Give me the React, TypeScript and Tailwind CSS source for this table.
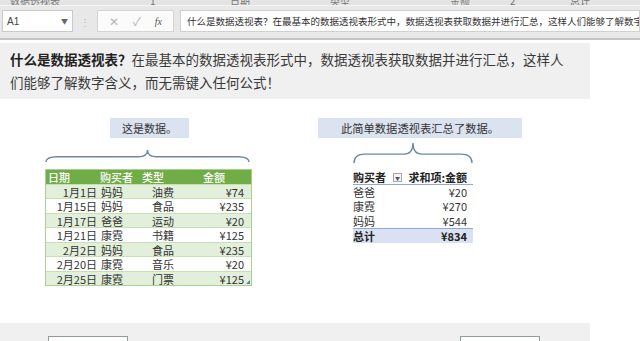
import React from "react";

const cjk = "font-['Noto_Sans_CJK_SC',sans-serif]";

const rows = [
  ["1月1日", "妈妈", "油费", "¥74"],
  ["1月15日", "妈妈", "食品", "¥235"],
  ["1月17日", "爸爸", "运动", "¥20"],
  ["1月21日", "康霓", "书籍", "¥125"],
  ["2月2日", "妈妈", "食品", "¥235"],
  ["2月20日", "康霓", "音乐", "¥20"],
  ["2月25日", "康霓", "门票", "¥125"],
];

const pivot = [
  ["爸爸", "¥20"],
  ["康霓", "¥270"],
  ["妈妈", "¥544"],
];

function Brace({ w, h }: { w: number; h: number }) {
  const c = w / 2;
  const m = h * 0.55;
  const d = `M1 ${h - 1} Q1 ${m} 12 ${m} L${c - 9} ${m} Q${c} ${m} ${c} 1 Q${c} ${m} ${c + 9} ${m} L${w - 12} ${m} Q${w - 1} ${m} ${w - 1} ${h - 1}`;
  return (
    <svg width={w} height={h} viewBox={`0 0 ${w} ${h}`} className="block">
      <path d={d} fill="none" stroke="#6f86ab" strokeWidth="1.4" />
    </svg>
  );
}

export default function App() {
  return (
    <div className={`w-[640px] h-[341px] overflow-hidden bg-white text-[#333] ${cjk}`}>
      {/* cut-off sheet row */}
      <div className="h-[6px] overflow-hidden bg-[#e4e4e4] border-b border-[#f4f4f4]">
        <div className="flex -mt-[7px] text-[10px] text-[#777] whitespace-nowrap">
          <span className="ml-[10px] w-[140px]">数据透视表</span>
          <span className="w-[80px]">1</span>
          <span className="w-[100px]">日期</span>
          <span className="w-[120px]">类型</span>
          <span className="w-[60px]">金额</span>
          <span className="w-[60px]">2</span>
          <span>总计</span>
        </div>
      </div>

      {/* formula bar */}
      <div className="h-[34px] bg-[#e8e8e8] border-b-2 border-[#c4c4c4] flex items-start pt-[4px] pl-[2px]">
        <div className="w-[71px] h-[22px] bg-white border border-[#c9c9c9] flex items-center justify-between px-[4px]">
          <span className="text-[10px] text-[#444] font-['Liberation_Sans',sans-serif]">A1</span>
          <span className="text-[7px] text-[#666]">▼</span>
        </div>
        <div className="w-[24px] h-[22px] flex items-center justify-center text-[10px] text-[#b5b5b5]">⋮</div>
        <div className="w-[77px] h-[22px] bg-[#fbfbfb] border border-[#d4d4d4] flex items-center justify-around px-[4px]">
          <span className="text-[12px] text-[#b8b8b8]">✕</span>
          <span className="text-[12px] text-[#b8b8b8]">✓</span>
          <span className="text-[10px] italic text-[#555] font-['Liberation_Serif',serif]">fx</span>
        </div>
        <div className="ml-[6px] flex-1 h-[22px] bg-white border border-[#d0d0d0] flex items-center pl-[6px] overflow-hidden">
          <span className="text-[9.5px] text-[#333] whitespace-nowrap">
            什么是数据透视表？在最基本的数据透视表形式中，数据透视表获取数据并进行汇总，这样人们能够了解数字含义，而无需键入任何公式！
          </span>
        </div>
      </div>

      {/* title panel */}
      <div className="mt-[3px] w-[590px] h-[56px] bg-[#f0f0f0] pl-[10px] pt-[5px] text-[13.5px] leading-[22.5px] text-[#3a3a3a]">
        <div className="whitespace-nowrap">
          <span className="font-bold text-[#222]">什么是数据透视表？</span>在最基本的数据透视表形式中，数据透视表获取数据并进行汇总，这样人
        </div>
        <div className="whitespace-nowrap">们能够了解数字含义，而无需键入任何公式！</div>
      </div>

      {/* diagrams */}
      <div className="flex mt-[19px] h-[168px]">
        {/* source data */}
        <div className="ml-[45px] w-[207px] flex flex-col">
          <div className="h-[20px] flex">
            <div className="ml-[65px] px-[12px] bg-[#dce3f0] text-[11px] leading-[20px] text-[#333]">这是数据。</div>
          </div>
          <div className="h-[32px] flex items-end pb-[6px]">
            <Brace w={205} h={14} />
          </div>
          <div className="relative border border-[#a9d08e] text-[11px] leading-[14.5px]">
            <div className="grid grid-cols-[53px_42px_60px_50px] h-[14px] leading-[14px] bg-[#70ad47] text-white font-medium">
              <span className="pl-[2px]">日期</span>
              <span className="pl-[1px]">购买者</span>
              <span className="pl-[1px]">类型</span>
              <span className="pl-[2px]">金额</span>
            </div>
            {rows.map((r, i) => (
              <div
                key={i}
                className={
                  i % 2 === 0
                    ? "grid grid-cols-[53px_42px_60px_50px] h-[14.5px] bg-[#e2efda] border-t border-[#c6e0b4]"
                    : "grid grid-cols-[53px_42px_60px_50px] h-[14.5px] bg-white border-t border-[#c6e0b4]"
                }
              >
                <span className="text-right pr-[2px]">{r[0]}</span>
                <span className="pl-[2px]">{r[1]}</span>
                <span className="pl-[11px]">{r[2]}</span>
                <span className="text-right pr-[7px]">{r[3]}</span>
              </div>
            ))}
            <span className="absolute right-[1px] bottom-[1px] w-0 h-0 border-l-[4px] border-l-transparent border-b-[4px] border-b-[#5b7fb5]" />
          </div>
        </div>

        {/* pivot */}
        <div className="ml-[66px] w-[204px] flex flex-col">
          <div className="h-[20px] bg-[#dce3f0] text-[11.3px] leading-[20px] text-center text-[#333]">此简单数据透视表汇总了数据。</div>
          <div className="h-[32px] flex items-end pb-[6px] pl-[35px]">
            <Brace w={120} h={22} />
          </div>
          <div className="ml-[35px] w-[120px] text-[11px] leading-[14px]">
            <div className="flex h-[15px] items-center font-bold text-[#222] border-b border-[#8ea9db]">
              <span className="w-[40px]">购买者</span>
              <span className="w-[9px] h-[9px] border border-[#a8a8a8] bg-[#f4f4f4] flex items-center justify-center text-[5px] text-[#555] leading-none">▼</span>
              <span className="flex-1 text-right pr-[6px]">求和项:金额</span>
            </div>
            {pivot.map((p) => (
              <div key={p[0]} className="flex h-[14.3px] items-center">
                <span className="flex-1">{p[0]}</span>
                <span className="pr-[6px]">{p[1]}</span>
              </div>
            ))}
            <div className="flex h-[15px] items-center bg-[#d9e1f2] border-t border-[#8ea9db] font-bold text-[#222]">
              <span className="flex-1">总计</span>
              <span className="pr-[6px]">¥834</span>
            </div>
          </div>
        </div>
      </div>

      {/* bottom panel */}
      <div className="mt-[37px] w-[590px] h-[18px] bg-[#f0f0f0] flex items-start pt-[13px]">
        <div className="ml-[48px] w-[80px] h-[20px] bg-white border border-[#8e9c9c]" />
        <div className="ml-[332px] w-[80px] h-[20px] bg-white border border-[#8e9c9c]" />
      </div>
    </div>
  );
}
